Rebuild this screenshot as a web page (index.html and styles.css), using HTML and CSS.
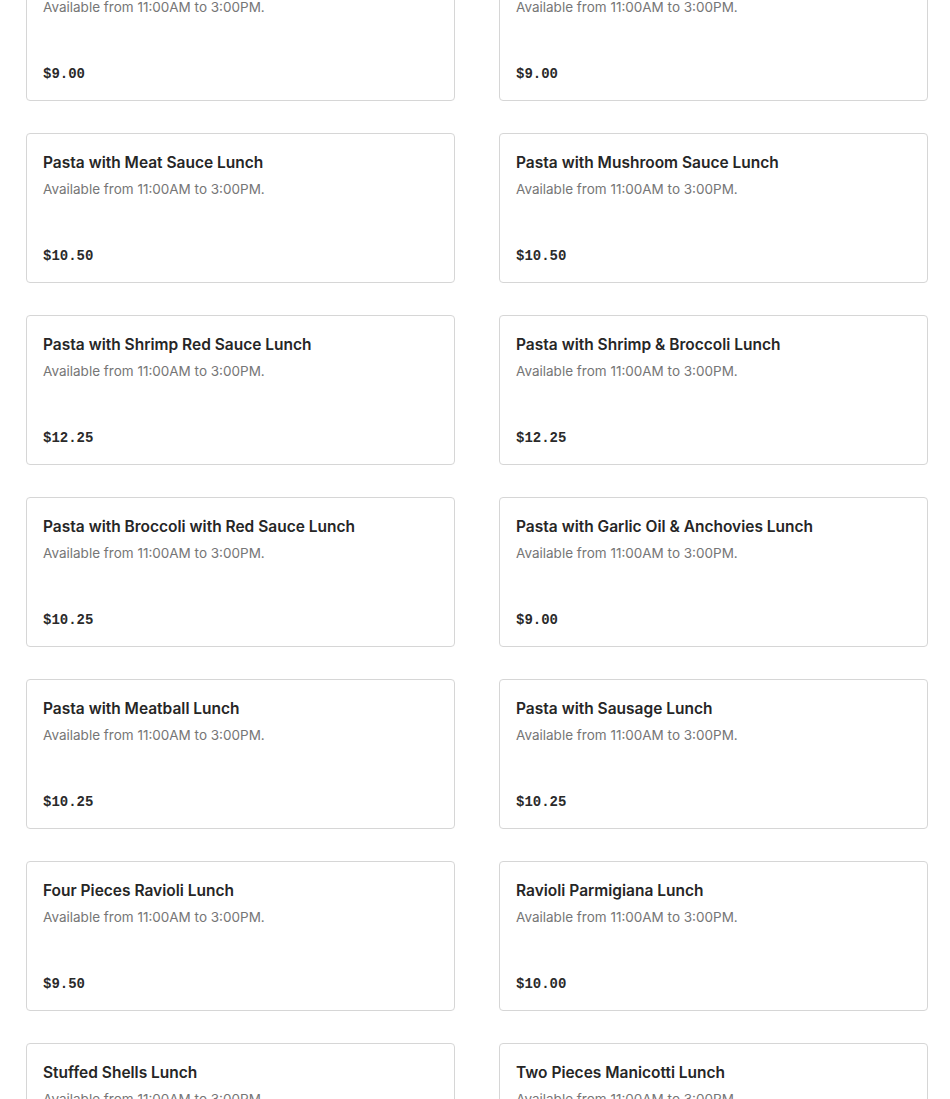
FILE: index.html
```html
<!DOCTYPE html>
<html>
<head>
<meta charset="utf-8">
<link rel="stylesheet" href="styles.css">
</head>
<body>
<main class="menu">
  <div class="grid">
    <div class="card"><h3 class="title">Pasta with Marinara Sauce Lunch</h3><p class="desc">Available from 11:00AM to 3:00PM.</p><div class="price">$9.00</div></div>
    <div class="card"><h3 class="title">Pasta with Garlic &amp; Oil Lunch</h3><p class="desc">Available from 11:00AM to 3:00PM.</p><div class="price">$9.00</div></div>
    <div class="card"><h3 class="title">Pasta with Meat Sauce Lunch</h3><p class="desc">Available from 11:00AM to 3:00PM.</p><div class="price">$10.50</div></div>
    <div class="card"><h3 class="title">Pasta with Mushroom Sauce Lunch</h3><p class="desc">Available from 11:00AM to 3:00PM.</p><div class="price">$10.50</div></div>
    <div class="card"><h3 class="title">Pasta with Shrimp Red Sauce Lunch</h3><p class="desc">Available from 11:00AM to 3:00PM.</p><div class="price">$12.25</div></div>
    <div class="card"><h3 class="title">Pasta with Shrimp &amp; Broccoli Lunch</h3><p class="desc">Available from 11:00AM to 3:00PM.</p><div class="price">$12.25</div></div>
    <div class="card"><h3 class="title">Pasta with Broccoli with Red Sauce Lunch</h3><p class="desc">Available from 11:00AM to 3:00PM.</p><div class="price">$10.25</div></div>
    <div class="card"><h3 class="title">Pasta with Garlic Oil &amp; Anchovies Lunch</h3><p class="desc">Available from 11:00AM to 3:00PM.</p><div class="price">$9.00</div></div>
    <div class="card"><h3 class="title">Pasta with Meatball Lunch</h3><p class="desc">Available from 11:00AM to 3:00PM.</p><div class="price">$10.25</div></div>
    <div class="card"><h3 class="title">Pasta with Sausage Lunch</h3><p class="desc">Available from 11:00AM to 3:00PM.</p><div class="price">$10.25</div></div>
    <div class="card"><h3 class="title">Four Pieces Ravioli Lunch</h3><p class="desc">Available from 11:00AM to 3:00PM.</p><div class="price">$9.50</div></div>
    <div class="card"><h3 class="title">Ravioli Parmigiana Lunch</h3><p class="desc">Available from 11:00AM to 3:00PM.</p><div class="price">$10.00</div></div>
    <div class="card"><h3 class="title">Stuffed Shells Lunch</h3><p class="desc">Available from 11:00AM to 3:00PM.</p><div class="price">$10.25</div></div>
    <div class="card"><h3 class="title">Two Pieces Manicotti Lunch</h3><p class="desc">Available from 11:00AM to 3:00PM.</p><div class="price">$10.25</div></div>
  </div>
</main>
</body>
</html>
```

FILE: styles.css
```css
html, body {
  margin: 0;
  padding: 0;
  background: #ffffff;
  overflow: hidden;
}
.menu {
  padding: 0 22px 0 26px;
  margin-top: -49px;
}
.grid {
  display: grid;
  grid-template-columns: 429px 429px;
  column-gap: 44px;
  row-gap: 32px;
}
.card {
  box-sizing: border-box;
  height: 150px;
  border: 1px solid #d6d6d6;
  border-radius: 4px;
  padding: 19px 16px 16px 16px;
  display: flex;
  flex-direction: column;
  font-family: Inter, "Liberation Sans", sans-serif;
}
.title {
  margin: 0;
  font-size: 15.5px;
  line-height: 20px;
  font-weight: 600;
  color: #262626;
}
.desc {
  margin: 6px 0 0 0;
  font-size: 13.5px;
  line-height: 20px;
  color: #767676;
}
.price {
  margin-top: auto;
  font-family: "Liberation Mono", monospace;
  font-weight: 700;
  font-size: 14px;
  line-height: 20px;
  color: #2a2a2a;
}
```
